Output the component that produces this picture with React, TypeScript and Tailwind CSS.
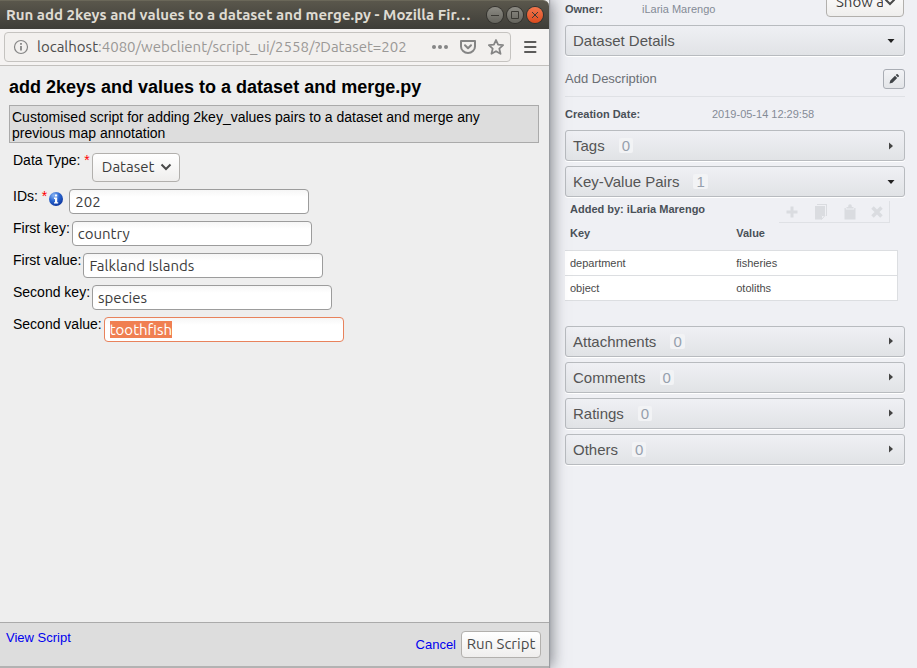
import type { ReactNode } from "react";

const ubuntu = "font-['Ubuntu','Noto_Sans',sans-serif]";

function Chevron({ className = "" }: { className?: string }) {
  return (
    <svg viewBox="0 0 12 8" className={`pointer-events-none absolute h-2 w-3 ${className}`} fill="none" stroke="#4a4a4a" strokeWidth="2">
      <path d="M1.5 1.5 L6 6 L10.5 1.5" />
    </svg>
  );
}

function WindowButton({ label, close = false, children }: { label: string; close?: boolean; children: ReactNode }) {
  return (
    <button
      type="button"
      aria-label={label}
      className={`flex size-4 shrink-0 items-center justify-center rounded-full ring-1 ring-[#33322e] ${
        close ? "bg-linear-to-b from-[#f2764c] to-[#dc4a1c]" : "bg-linear-to-b from-[#8c8b84] to-[#65645d]"
      }`}
    >
      <svg viewBox="0 0 16 16" className="size-4" fill="none" stroke="#3b3a35" strokeWidth="1">
        {children}
      </svg>
    </button>
  );
}

function TitleBar() {
  return (
    <header className="flex h-[29px] shrink-0 items-center gap-1 rounded-tr-md border-t border-[#6a6759] bg-linear-to-b from-[#5a574c] to-[#3e3d38] pr-[6px] pl-[6px]">
      <h1 className={`${ubuntu} min-w-0 flex-1 text-[15px] leading-5 font-bold whitespace-nowrap text-[#dfdbd2]`}>
        Run add 2keys and values to a dataset and merge.py - Mozilla Fir…
      </h1>
      <WindowButton label="Minimize">
        <path d="M4 8.5h8" />
      </WindowButton>
      <WindowButton label="Maximize">
        <path d="M4.5 4.5h7v7h-7z" />
      </WindowButton>
      <WindowButton label="Close" close>
        <path d="M5 5l6 6M11 5l-6 6" />
      </WindowButton>
    </header>
  );
}

function AddressBar() {
  return (
    <div className="flex h-[37px] shrink-0 items-center border-b border-[#c2c0bd] bg-[#f5f3f2] pr-3 pl-1">
      <div className="flex h-[30px] min-w-0 flex-1 items-center rounded-[4px] border border-[#c5c3c0] bg-[#f2f0ee] pr-[6px] pl-2">
        <svg viewBox="0 0 16 16" className="size-4 shrink-0" fill="none" stroke="#858585">
          <circle cx="8" cy="8" r="6.5" strokeWidth="1.2" />
          <path d="M8 7v4.5M8 4v1.8" strokeWidth="1.8" />
        </svg>
        <p className={`${ubuntu} min-w-0 flex-1 truncate pl-2 text-[15px] leading-5 text-[#9a9896]`}>
          <span className="text-[#4c4c4c]">localhost</span>:4080/webclient/script_ui/2558/?Dataset=202
        </p>
        <div className="flex shrink-0 items-center gap-3">
          <button type="button" aria-label="Page actions">
            <svg viewBox="0 0 16 16" className="size-4" fill="#858585">
              <circle cx="2" cy="8" r="2" />
              <circle cx="8" cy="8" r="2" />
              <circle cx="14" cy="8" r="2" />
            </svg>
          </button>
          <button type="button" aria-label="Save to Pocket">
            <svg viewBox="0 0 16 16" className="size-4" fill="none" stroke="#858585" strokeWidth="2" strokeLinejoin="round" strokeLinecap="round">
              <path d="M1 2h14v5.500a7 6.500 0 0 1-14 0z" />
              <path d="M5 6.300l3 3 3-3" />
            </svg>
          </button>
          <button type="button" aria-label="Bookmark this page">
            <svg viewBox="0 0 16 16" className="size-4" fill="none" stroke="#858585" strokeWidth="1.8" strokeLinejoin="round">
              <path d="M8 1l2.100 4.700 5 .5-3.800 3.400 1.200 5.200L8 12.200l-4.500 2.600 1.200-5.200L.9 6.200l5-.5z" />
            </svg>
          </button>
        </div>
      </div>
      <button type="button" aria-label="Open menu" className="ml-3">
        <svg viewBox="0 0 14 14" className="size-[14px]" stroke="#5c5b5a" strokeWidth="2" strokeLinecap="round">
          <path d="M2 2h10.500M2 7h10.500M2 12h10.500" />
        </svg>
      </button>
    </div>
  );
}

function InfoIcon() {
  return (
    <svg viewBox="0 0 14 14" className="mt-[3px] mr-[6px] size-[14px] shrink-0">
      <defs>
        <radialGradient id="info" cx="35%" cy="25%" r="80%">
          <stop offset="0" stopColor="#8db8f5" />
          <stop offset="0.5" stopColor="#2a66d0" />
          <stop offset="1" stopColor="#0c349c" />
        </radialGradient>
      </defs>
      <circle cx="7" cy="7" r="7" fill="url(#info)" />
      <path d="M6 2.500h2.200v2H6zM5 5.600h3.200v4.600h1v1.300H5v-1.300h1V6.900H5z" fill="#fff" />
    </svg>
  );
}

const textBox = `${ubuntu} h-[25px] w-[240px] rounded-[4px] border bg-linear-to-b from-[#f6f6f6] to-white to-30% px-[5px] text-[15px] text-[#3c3c3c] outline-none selection:bg-[#f07f52] selection:text-white`;

function Field({ id, label, required, info, value, active }: { id: string; label: string; required?: boolean; info?: boolean; value: string; active?: boolean }) {
  return (
    <div className="flex items-start">
      <label htmlFor={id} className="shrink-0 pr-[2px] text-[14px] leading-[15px]">
        {label}
        {required && <span className="text-[#f00]"> *</span>}
      </label>
      {info && <InfoIcon />}
      <input
        id={id}
        type="text"
        defaultValue={value}
        autoFocus={active}
        onFocus={active ? (e) => e.currentTarget.select() : undefined}
        className={`${textBox} ${active ? "border-[#e8825c]" : "border-[#9c9c9c]"}`}
      />
    </div>
  );
}

function ScriptWindow() {
  return (
    <section className="relative z-10 flex min-h-screen min-w-0 flex-col border-b-2 border-[#b2b2b2] bg-[#eee] shadow-[1px_0_1px_#9a9da1,3px_0_14px_rgba(60,64,72,0.6)]">
      <TitleBar />
      <AddressBar />
      <main className="flex-1 px-[9px] pt-[9px] text-black">
        <h2 className="text-[18px] leading-6 font-bold">add 2keys and values to a dataset and merge.py</h2>
        <p className="mt-[6px] mr-[1px] border border-[#aaa] bg-[#ddd] pt-[3px] pr-2 pb-[1px] pl-[2px] text-[14px] leading-4">
          Customised script for adding 2key_values pairs to a dataset and merge any previous map annotation
        </p>
        <form className="flex flex-col gap-[7px] px-1 pt-[10px]">
          <div className="flex items-start">
            <label htmlFor="type" className="shrink-0 pr-[2px] text-[14px] leading-[15px]">
              Data Type: <span className="text-[#f00]">*</span>
            </label>
            <div className="relative">
              <select id="type" className={`${ubuntu} h-[29px] w-[88px] appearance-none rounded-[4px] border border-[#b2b0ad] bg-linear-to-b from-white to-[#efeeed] pl-[9px] text-[15px] text-[#3c3c3c]`}>
                <option>Dataset</option>
              </select>
              <Chevron className="top-[10px] right-2" />
            </div>
          </div>
          <Field id="ids" label="IDs:" required info value="202" />
          <Field id="key1" label="First key:" value="country" />
          <Field id="value1" label="First value:" value="Falkland Islands" />
          <Field id="key2" label="Second key:" value="species" />
          <Field id="value2" label="Second value:" value="toothfish" active />
        </form>
      </main>
      <footer className="flex h-11 shrink-0 items-center justify-between border-t border-[#aaa] bg-[#ddd] pr-2 pl-[6px] text-[13px] text-[#00e]">
        <a href="#script" className="-mt-[14px]">View Script</a>
        <div className="flex items-center gap-[5px]">
          <a href="#cancel">Cancel</a>
          <button type="button" className={`${ubuntu} h-[27px] w-20 rounded-[4px] border border-[#b2b0ad] bg-linear-to-b from-white to-[#efeeed] text-[15px] whitespace-nowrap text-[#4a4a4a]`}>
            Run Script
          </button>
        </div>
      </footer>
    </section>
  );
}

function PanelHeading({ title, count, open = false }: { title: string; count?: number; open?: boolean }) {
  return (
    <button
      type="button"
      aria-expanded={open}
      className="flex h-[31px] w-full items-center rounded-[3px] border border-[#b8bbbf] bg-linear-to-b from-[#eff0f4] to-[#e1e3e6] pr-[9px] pl-[7px] text-[15px] leading-[15px] text-[#555] shadow-[0_1px_0_#fff]"
    >
      <span>{title}</span>
      {count !== undefined && <span className="ml-[14px] rounded-[2px] bg-[#f2f3f5] px-[3px] text-[#96a0ad]">{count}</span>}
      <svg viewBox="0 0 8 8" className="ml-auto size-2" fill={open ? "#222" : "#444"}>
        <path d={open ? "M0.500 2h7L4 6z" : "M2 0.500v7L6 4z"} />
      </svg>
    </button>
  );
}

function AnnotationTools() {
  return (
    <div className="flex h-[22px] w-[111px] items-center justify-between border-r border-b border-[#dfe1e5] px-[6px] text-[#dadce0]">
      <button type="button" aria-label="Add">
        <svg viewBox="0 0 14 14" className="size-[14px]" stroke="currentColor" strokeWidth="3">
          <path d="M7 1.500v11M1.500 7h11" />
        </svg>
      </button>
      <button type="button" aria-label="Copy">
        <svg viewBox="0 0 14 16" className="h-4 w-[14px]" fill="currentColor">
          <path d="M3 0h10v12h-1V1H3z" />
          <path d="M1 2h10v9l-4 4.500H1z" />
          <path d="M7.500 11.500h3.500l-3.500 4z" fill="#eff0f4" stroke="currentColor" />
        </svg>
      </button>
      <button type="button" aria-label="Paste">
        <svg viewBox="0 0 12 16" className="h-4 w-3" fill="currentColor">
          <path d="M4.200 2a1.800 1.800 0 0 1 3.600 0v1h1.700v1.500h-7V3h1.700z" />
          <path d="M0.500 4h1.300v1.500h8.400V4h1.300v11.500h-11z" />
        </svg>
      </button>
      <button type="button" aria-label="Delete">
        <svg viewBox="0 0 12 12" className="size-3" stroke="currentColor" strokeWidth="3.5">
          <path d="M1.500 1.500l9 9M10.500 1.500l-9 9" />
        </svg>
      </button>
    </div>
  );
}

const pairs = [
  ["department", "fisheries"],
  ["object", "otoliths"],
];

function DetailsPanel() {
  return (
    <aside className="min-w-0 bg-[#eff0f4] pr-3 pl-4 text-[11px] leading-4 text-[#4a5058]">
      <div className="flex h-[17px] items-end justify-between overflow-hidden">
        <dl className="flex">
          <dt className="w-[77px] font-bold">Owner:</dt>
          <dd className="text-[#848b96]">iLaria Marengo</dd>
        </dl>
        <div className="relative mr-[1px]">
          <select aria-label="Show" className={`${ubuntu} block h-[29px] w-[78px] appearance-none rounded-[4px] border border-[#b2b0ad] bg-linear-to-b from-white to-[#efeeed] pr-5 pb-[2px] pl-[9px] text-[15px] text-[#3c3c3c]`}>
            <option>Show all</option>
          </select>
          <Chevron className="top-[10px] right-2" />
        </div>
      </div>
      <div className="pt-2">
        <PanelHeading title="Dataset Details" open />
      </div>
      <div className="flex h-[41px] items-center justify-between border-b border-[#dfe1e5] pt-[6px] text-[13px] text-[#6b6f75]">
        <span>Add Description</span>
        <button type="button" aria-label="Edit description" className="flex h-5 w-[22px] items-center justify-center rounded-[3px] border border-[#a9adb4] bg-linear-to-b from-[#f2f3f6] to-[#e3e5e8]">
          <svg viewBox="0 0 10 10" className="size-[10px]" fill="#3f4347">
            <path d="M0.500 9.500l.8-3 4.700-4.700 2.200 2.200-4.700 4.700zM6.700 1.100l.9-.9a.7.7 0 0 1 1 0l1.200 1.200a.7.7 0 0 1 0 1l-.9.9z" />
          </svg>
        </button>
      </div>
      <dl className="flex items-center pt-[9px] pb-2">
        <dt className="w-[147px] font-bold">Creation Date:</dt>
        <dd className="text-[#848b96]">2019-05-14 12:29:58</dd>
      </dl>
      <div className="flex flex-col gap-[5px]">
        <PanelHeading title="Tags" count={0} />
        <PanelHeading title="Key-Value Pairs" count={1} open />
      </div>
      <div className="mt-1 mr-[15px] flex justify-between pl-[5px] font-bold">
        <span>Added by: iLaria Marengo</span>
        <AnnotationTools />
      </div>
      <div className="mr-[7px]">
        <table className="w-full table-fixed border-collapse text-left text-[#4a4a4a]">
          <thead>
            <tr className="h-[27px] align-top text-[#4a5058]">
              <th className="pt-[2px] pl-[5px]">Key</th>
              <th className="pt-[2px] pl-[5px]">Value</th>
            </tr>
          </thead>
          <tbody>
            {pairs.map(([key, value]) => (
              <tr key={key} className="h-[25px] border-y border-r border-[#dcdee1] bg-white">
                <td className="pl-[5px]">{key}</td>
                <td className="pl-[5px]">{value}</td>
              </tr>
            ))}
          </tbody>
        </table>
      </div>
      <div className="flex flex-col gap-[5px] pt-[25px]">
        <PanelHeading title="Attachments" count={0} />
        <PanelHeading title="Comments" count={0} />
        <PanelHeading title="Ratings" count={0} />
        <PanelHeading title="Others" count={0} />
      </div>
    </aside>
  );
}

export default function App() {
  return (
    <div className="grid min-h-screen grid-cols-[549fr_368fr] bg-[#eff0f4] font-['Liberation_Sans',Arial,sans-serif]">
      <ScriptWindow />
      <DetailsPanel />
    </div>
  );
}
